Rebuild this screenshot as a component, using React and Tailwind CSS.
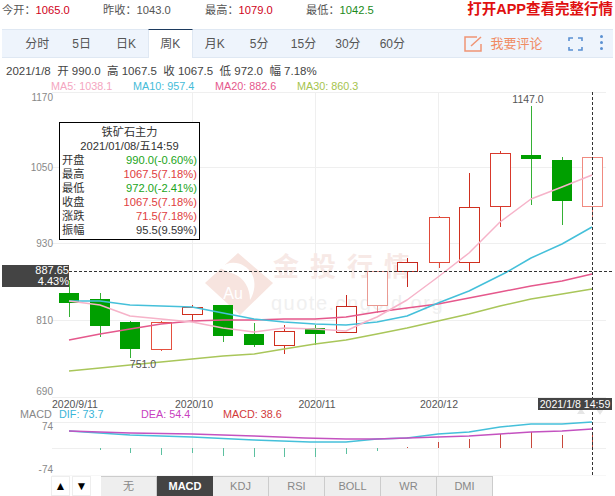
import React from 'react'

const quotes = [
  { label: '今开', value: '1065.0', color: 'text-[#d0021b]', width: 'w-[101px]' },
  { label: '昨收', value: '1043.0', color: 'text-[#555]', width: 'w-[102px]' },
  { label: '最高', value: '1079.0', color: 'text-[#d0021b]', width: 'w-[101px]' },
  { label: '最低', value: '1042.5', color: 'text-[#1a8a1a]', width: 'w-[120px]' },
]

const tabs = ['分时', '5日', '日K', '周K', '月K', '5分', '15分', '30分', '60分']
const indicators = ['无', 'MACD', 'KDJ', 'RSI', 'BOLL', 'WR', 'DMI']

// x, wick top, body top, body bottom, wick bottom, up colour (null = green candle)
const candles = [
  [69, 280, 293, 303, 317, null],
  [100, 293, 299, 326, 337, null],
  [130, 321, 322, 349, 358, null],
  [161, 321, 322, 349, 351, '#e5503f'],
  [192, 305, 307, 314, 322, '#d0301f'],
  [223, 305, 305, 336, 342, null],
  [254, 323, 334, 345, 347, null],
  [284, 325, 331, 345, 354, '#d0301f'],
  [315, 325, 328, 334, 345, null],
  [346, 295, 306, 332, 333, '#c8281e'],
  [377, 271, 271, 305, 313, '#ea9a92'],
  [407, 258, 262, 271, 287, '#c8281e'],
  [439, 216, 217, 262, 268, '#e04a3a'],
  [469, 173, 207, 262, 272, '#d0301f'],
  [500, 151, 153, 206, 227, '#d8392c'],
  [531, 106, 155, 159, 205, null],
  [562, 157, 160, 201, 225, null],
  [592, 157, 157, 206, 217, '#f08a80'],
]

const ma5 = '69,301 100,305 130,316 161,319 192,322 223,328 254,332 284,328 315,329 346,331 365,322 377,317 407,300 438,277 469,253 500,222 531,199 562,187 592,175'
const ma10 = '69,301 100,301 130,305 161,306 192,307 223,313 254,319 284,322 315,324 346,325 377,322 407,316 438,303 469,291 505,273 531,258 562,244 592,227'
const ma20 = '69,340 100,334 130,329 161,324 192,321 223,320 254,320 284,319 315,319 346,317 377,312 407,308 438,304 469,298 500,292 531,286 562,281 592,274'
const ma30 = '69,371 100,368 130,365 161,362 192,359 223,356 254,354 284,349 315,344 346,340 377,334 407,328 438,321 469,314 500,306 531,299 562,294 592,289'
const dif = '69,431 130,435 192,437 254,440 310,442 346,442 377,439 407,438 438,434 469,432 500,427 531,424 562,424 592,422'
const dea = '69,431 130,433 192,434 254,436 305,438 346,439 377,439 407,438 438,437 469,436 500,434 531,432 562,431 592,429'

// x, end y of the histogram bar (baseline is 448)
const bars = [
  [100, 450], [130, 453], [161, 455], [192, 453], [223, 456], [254, 457], [284, 457], [315, 457],
  [346, 454], [377, 451], [407, 447], [438, 442], [469, 439], [500, 434], [531, 432], [562, 435], [592, 435],
]

const tooltipRows = [
  ['开盘', '990.0(-0.60%)', 'text-[#1aa51a]'],
  ['最高', '1067.5(7.18%)', 'text-[#e04040]'],
  ['最低', '972.0(-2.41%)', 'text-[#1aa51a]'],
  ['收盘', '1067.5(7.18%)', 'text-[#e04040]'],
  ['涨跌', '71.5(7.18%)', 'text-[#e04040]'],
  ['振幅', '95.5(9.59%)', 'text-[#333]'],
]

function Chart() {
  return (
    <svg width="615" height="384" viewBox="0 92 615 384" className="block" fontSize="10.5">
      {/* grid */}
      <g stroke="#efefef" strokeWidth="1">
        {[92.5, 167.5, 243.5, 320.5, 397.5, 422.5, 448.5, 476].map((y) => (
          <line key={y} x1="52" x2="606" y1={y} y2={y} />
        ))}
        {[192.5, 315.5, 438.5].map((x) => (
          <line key={x} x1={x} x2={x} y1="92" y2="476" />
        ))}
      </g>

      {/* watermark */}
      <g>
        <path d="M238 253 L273 283 L240 315 L205 283 Z" fill="#f7e4df" />
        <path d="M220 268 C232 258 246 264 252 274 C256 282 255 292 250 300 C250 288 244 278 234 274 C228 272 224 270 220 268 Z" fill="#ffffff" />
        <text x="233" y="299" fill="#ffffff" fontSize="16" textAnchor="middle">Au</text>
        <text x="273" y="276" fill="#f7e9e6" fontSize="26" fontWeight="700" letterSpacing="11">金投行情</text>
        <text x="271" y="310" fill="#f0f0f0" fontSize="20" letterSpacing="1.5">quote.cngold.org</text>
      </g>

      {/* candles */}
      {candles.map(([x, wt, top, bottom, wb, color]) => (
        <g key={x}>
          <line x1={x + 0.5} x2={x + 0.5} y1={wt} y2={wb} stroke={color || '#35b035'} />
          {color ? (
            <rect x={x - 9.5} y={top + 0.5} width="20" height={bottom - top} fill="#fff" stroke={color} />
          ) : (
            <rect x={x - 10} y={top} width="20" height={bottom - top} fill="#009f00" />
          )}
        </g>
      ))}

      {/* moving averages */}
      <g fill="none" strokeWidth="1.5" strokeLinejoin="round">
        <polyline points={ma30} stroke="#a9c65a" />
        <polyline points={ma20} stroke="#e5588c" />
        <polyline points={ma10} stroke="#45c0da" />
        <polyline points={ma5} stroke="#f6b3c9" />
      </g>

      {/* axis labels */}
      <g fill="#888" textAnchor="end" fontSize="10">
        <text x="53" y="101">1170</text>
        <text x="53" y="171">1050</text>
        <text x="53" y="247">930</text>
        <text x="53" y="324">810</text>
        <text x="53" y="395">690</text>
        <text x="53" y="430">74</text>
        <text x="53" y="473">-74</text>
      </g>
      <g fill="#555" textAnchor="middle">
        <text x="75" y="408">2020/9/11</text>
        <text x="194" y="408">2020/10</text>
        <text x="317" y="408">2020/11</text>
        <text x="439" y="408">2020/12</text>
        <text x="528" y="103">1147.0</text>
        <text x="143" y="368">751.0</text>
      </g>

      {/* macd */}
      <g fontSize="10.8">
        <text x="20" y="418" fill="#888">MACD</text>
        <text x="59" y="418" fill="#3ab5d8">DIF: 73.7</text>
        <text x="141" y="418" fill="#c83fc0">DEA: 54.4</text>
        <text x="223" y="418" fill="#d23a3a">MACD: 38.6</text>
      </g>
      {bars.map(([x, y]) => (
        <line
          key={x}
          x1={x + 0.5}
          x2={x + 0.5}
          y1="448"
          y2={y}
          stroke={y > 448 ? '#5cc0a0' : '#c8483c'}
        />
      ))}
      <g fill="none" strokeWidth="1.5">
        <polyline points={dif} stroke="#45c0da" />
        <polyline points={dea} stroke="#c452c0" />
      </g>
      <path d="M577 414 L581 408 L585 414 Z M596 409 L604 409 L600 415 Z" fill="#e6e6e6" />

      {/* crosshair */}
      <g stroke="#333" strokeDasharray="3 2">
        <line x1="69" x2="613" y1="271.5" y2="271.5" />
        <line x1="592.5" x2="592.5" y1="92" y2="476" />
      </g>
    </svg>
  )
}

export default function App() {
  return (
    <div className="relative w-[615px] h-[496px] overflow-hidden bg-white font-['Liberation_Sans','Noto_Sans_CJK_SC',sans-serif]">
      {/* quote row */}
      <div className="flex items-center h-[29px] pl-[2px] pb-[10px] pt-[1px] text-[11.2px] text-[#555]">
        {quotes.map((q) => (
          <div key={q.label} className={q.width}>
            {q.label}：<span className={q.color}>{q.value}</span>
          </div>
        ))}
        <div className="ml-auto pr-[2px] text-[14.5px] font-bold text-[#e01010]">打开APP查看完整行情</div>
      </div>

      {/* toolbar */}
      <div className="flex items-stretch h-[29px] mx-[2px] bg-[#eef4fc] border-t border-b border-[#dfe8f3] text-[12px] text-[#555]">
        <div className="flex pl-[13px]">
          {tabs.map((t) => (
            <div
              key={t}
              className={
                t === '周K'
                  ? 'w-[44.4px] flex items-center justify-center bg-white border-t border-t-[#1c3a5e] border-x border-x-[#dfe8f3] -mt-px h-[29px]'
                  : 'w-[44.4px] flex items-center justify-center'
              }
            >
              {t}
            </div>
          ))}
        </div>
        <div className="flex items-center ml-[49px] gap-[8px] text-[13px] text-[#f08c64]">
          <svg width="19" height="16" viewBox="0 0 19 16" fill="none" stroke="#f09474" strokeWidth="1.5">
            <path d="M17 8 V15 H1 V1 H13" />
            <path d="M7 10 L17 1" />
          </svg>
          我要评论
        </div>
        <div className="flex items-center ml-[25px]">
          <svg width="15" height="14" viewBox="0 0 15 14" fill="none" stroke="#5a90d2" strokeWidth="1.6">
            <path d="M1 4 V1 H5 M10 1 H14 V4 M14 10 V13 H10 M5 13 H1 V10" />
          </svg>
        </div>
        <div className="flex flex-col items-center justify-center gap-[3px] ml-[17px] pb-[3px]">
          <span className="w-[3px] h-[3px] rounded-full bg-[#5a90d2]" />
          <span className="w-[3px] h-[3px] rounded-full bg-[#5a90d2]" />
          <span className="w-[3px] h-[3px] rounded-full bg-[#5a90d2]" />
        </div>
      </div>

      {/* info rows */}
      <div className="h-[21px] pl-[6px] pt-[5px] text-[11.5px] leading-[16px] text-[#444] whitespace-pre">
        2021/1/8  开 990.0  高 1067.5  收 1067.5  低 972.0  幅 7.18%
      </div>
      <div className="flex h-[13px] pl-[51px] text-[10.8px] leading-[14px]">
        <span className="w-[82px] text-[#f4a6c0]">MA5: 1038.1</span>
        <span className="w-[82px] text-[#45bcd8]">MA10: 957.4</span>
        <span className="w-[82px] text-[#e5588c]">MA20: 882.6</span>
        <span className="text-[#a5c44e]">MA30: 860.3</span>
      </div>

      <Chart />

      {/* indicator buttons */}
      <div className="flex h-[20px] pl-[51px] text-[11px]">
        <div className="flex gap-[2px]">
          <div className="w-[19px] flex items-center justify-center border border-[#eee] text-[12px] text-black">▲</div>
          <div className="w-[19px] flex items-center justify-center border border-[#eee] text-[12px] text-black">▼</div>
        </div>
        <div className="flex ml-[10px]">
          {indicators.map((name) => (
            <div
              key={name}
              className={
                name === 'MACD'
                  ? 'w-[56px] flex items-center justify-center bg-[#444] text-white font-bold'
                  : 'w-[56px] flex items-center justify-center bg-[#eee] text-[#888] border-t border-r border-[#ccc]'
              }
            >
              {name}
            </div>
          ))}
        </div>
      </div>

      {/* tooltip */}
      <div className="absolute left-[59px] top-[122px] w-[141px] h-[118px] bg-white border border-black px-[2px] text-[11.2px] leading-[14px] text-[#333]">
        <div className="text-center pt-[2px]">铁矿石主力</div>
        <div className="text-center">2021/01/08/五14:59</div>
        {tooltipRows.map(([label, value, color]) => (
          <div key={label} className="flex justify-between">
            <span>{label}</span>
            <span className={color}>{value}</span>
          </div>
        ))}
      </div>

      {/* price tag */}
      <div className="absolute left-[2px] top-[265px] w-[67px] h-[22px] bg-[#444] text-white text-[11px] leading-[11px] text-right">
        <div>887.65</div>
        <div>4.43%</div>
      </div>

      {/* time tag */}
      <div className="absolute left-[538px] top-[398px] w-[74px] h-[12px] bg-[#444] text-white text-[10.6px] leading-[12px] text-center whitespace-nowrap">
        2021/1/8 14:59
      </div>
    </div>
  )
}
